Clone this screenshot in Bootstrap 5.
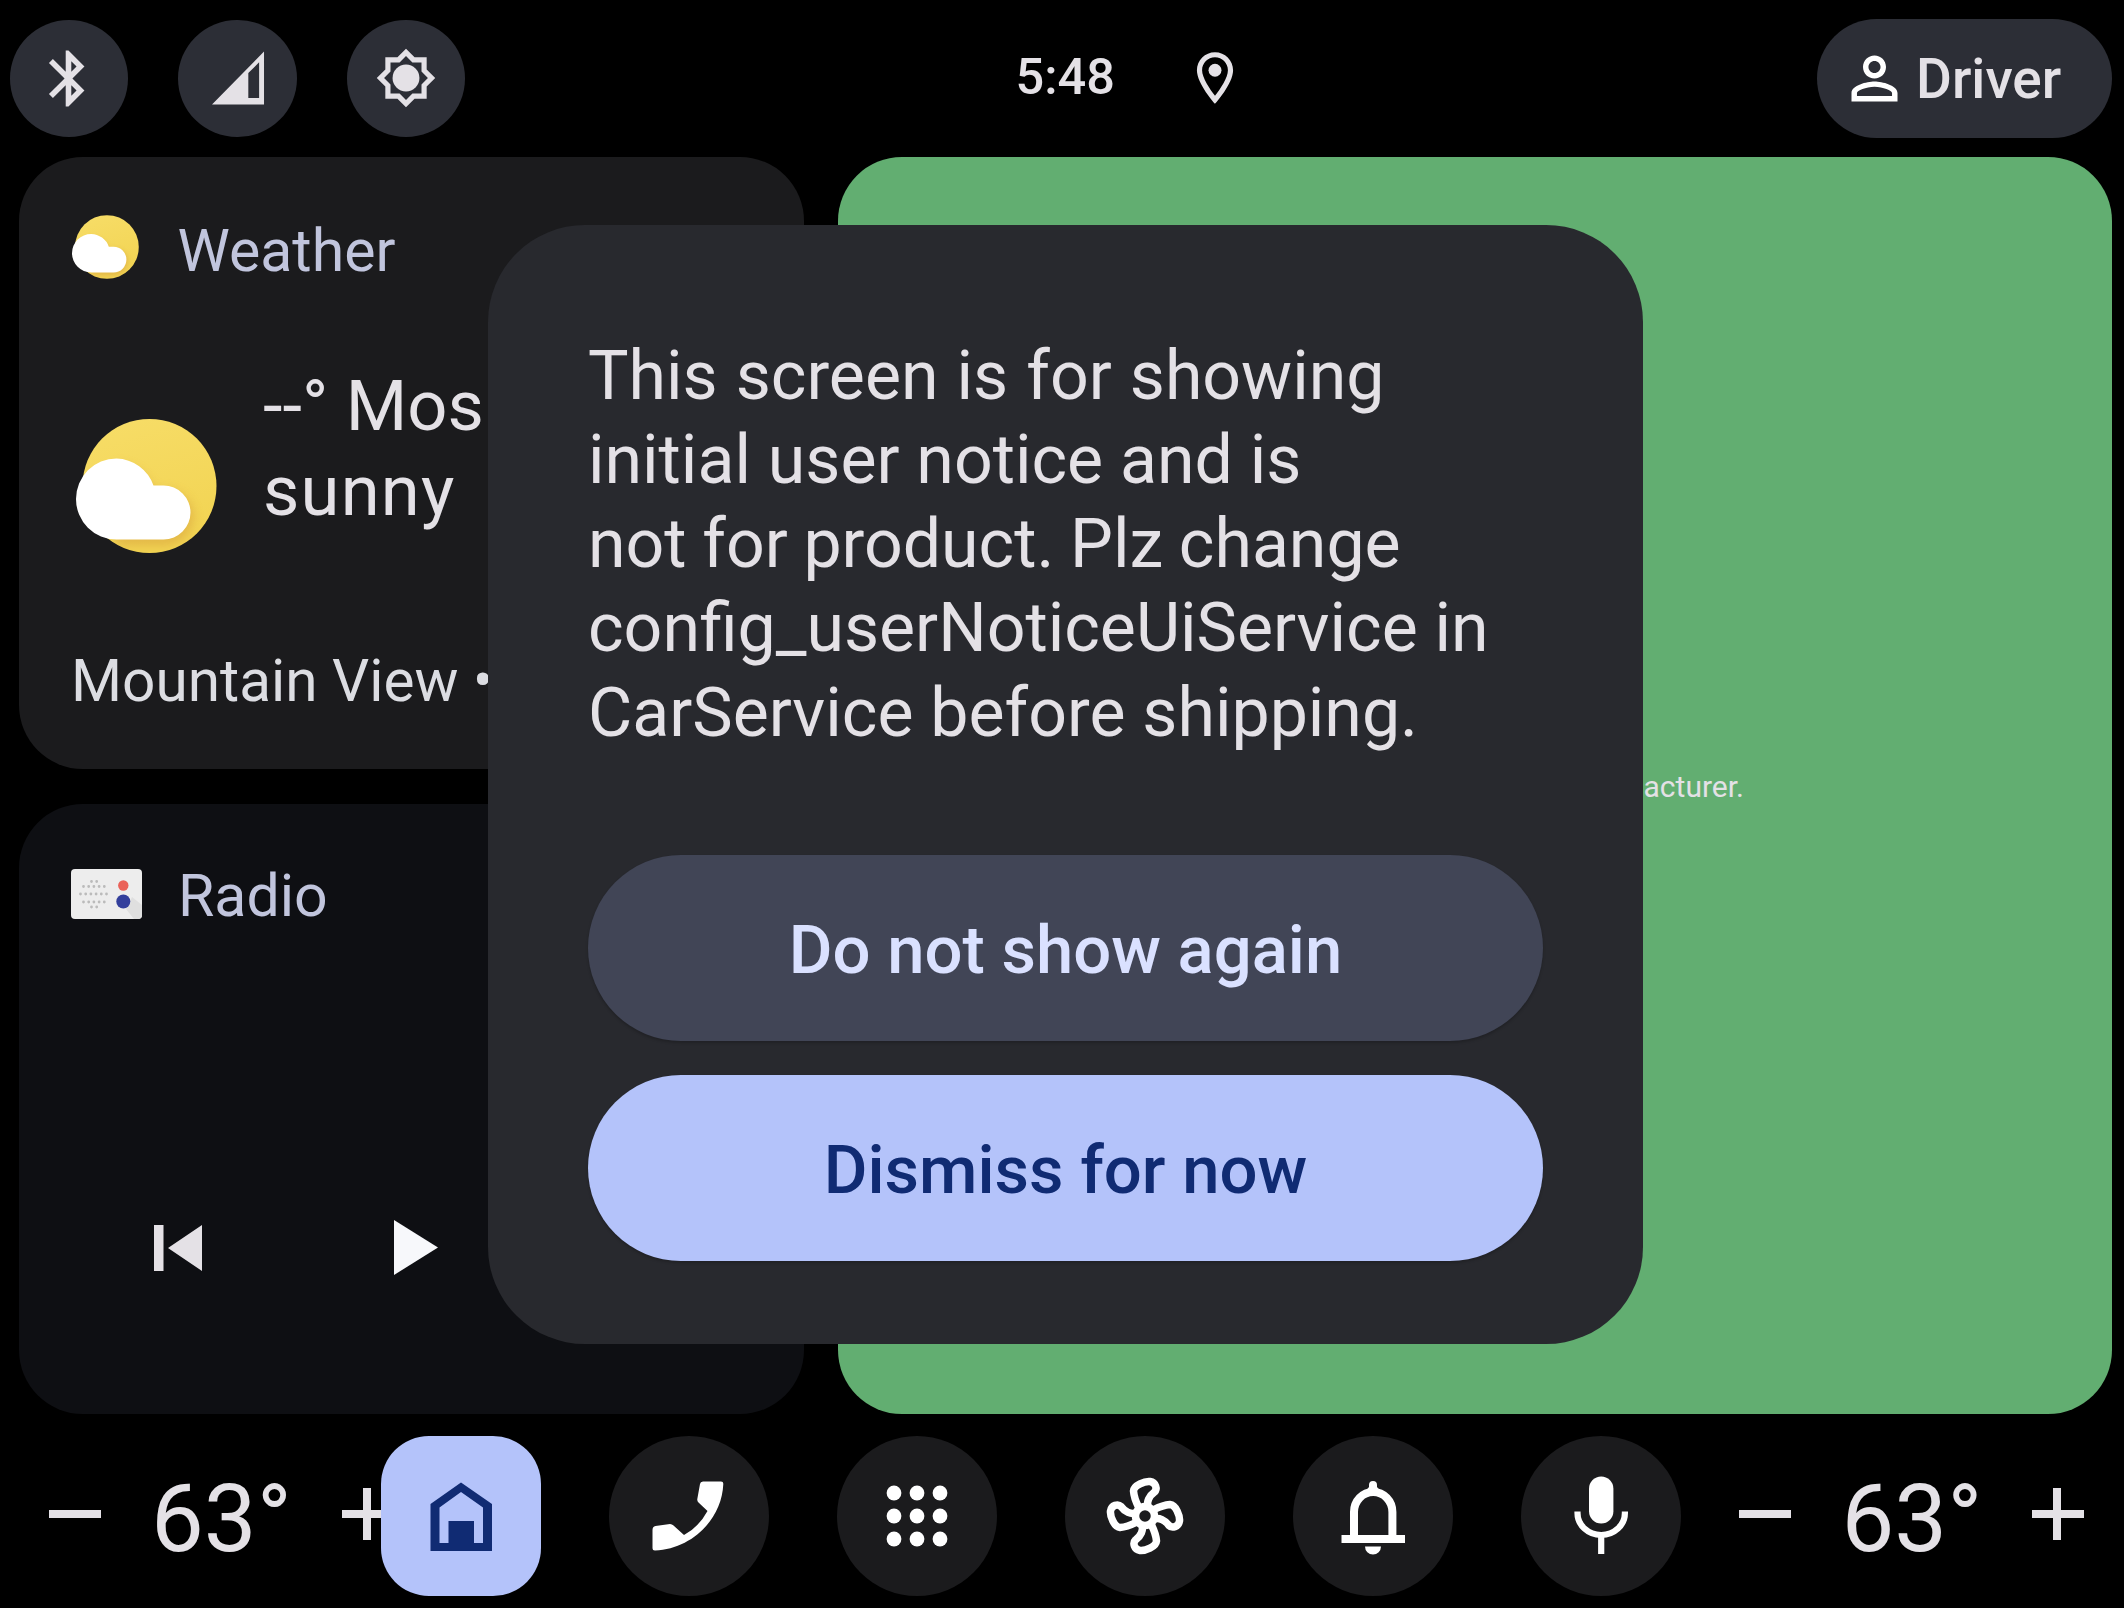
<!DOCTYPE html>
<html lang="en">
<head>
<meta charset="utf-8">
<meta name="viewport" content="width=device-width, initial-scale=1">
<title>Car home</title>
<link rel="stylesheet" href="https://cdn.jsdelivr.net/npm/bootstrap@5.3.0/dist/css/bootstrap.min.css">
<style>
html, body { height: 100%; }
body { background: #000; color: #e4e1e6; font-family: Roboto, "Liberation Sans", sans-serif; overflow: hidden; }
svg { display: block; flex: none; }
.screen { width: 2124px; height: 1608px; }
.topbar { height: 156.5px; padding: 0 12px 0 9.5px; }
.topbar .side { flex: 1 1 0; gap: 50.5px; }
.quick { width: 118.3px; height: 117px; background: #2c2e36; color: #e4e1e6; }
.signal { margin-left: 3px; }
.clock { font-size: 50.5px; font-weight: 500; line-height: 1; margin-top: -2px; }
.status { gap: 69px; padding-left: 140px; }
.driver { width: 295px; height: 118.5px; background: #2c2e36; color: #e4e1e6; font-size: 55px; font-weight: 500; padding: 0 0 0 23px; gap: 7px; }
.driver span { padding-top: 1px; }
.panes { height: 1257.5px; padding: 0 12px 0 19px; gap: 34px; }
.left-col { width: 785px; gap: 34.5px; }
.pane { border-radius: 64px; overflow: hidden; }
.weather { height: 612.5px; background: #1b1b1d; padding: 58px 52px 0; }
.radio { height: 610.5px; background: #0e0f13; padding: 58px 52px 0; }
.pane-title { height: 69px; font-size: 59px; line-height: 68px; color: #c1c5dd; gap: 38.5px; }
.radio .pane-title { gap: 36px; }
.radio .pane-title svg { margin-bottom: 5px; }
.weather .pane-title svg { margin-left: 1px; }
.weather .pane-title span { padding-top: 2px; }
.forecast { font-size: 70.5px; line-height: 84.5px; gap: 46px; margin-top: 80.5px; }
.forecast .sky { letter-spacing: 1.2px; }
.sun-large { margin: 55px 0 0 5px; }
.place { font-size: 58.5px; line-height: 68px; color: #dcdde2; margin-top: 94px; }
.transport { margin-top: 289.5px; padding-left: 83px; gap: 192px; }
.map-pane { background: #62ae71; font-size: 30px; line-height: 36px; padding: 612px 368px 0 0; }
.navrow { height: 194px; padding-top: 9px; }
.climate { width: 381px; font-size: 94px; line-height: 110px; overflow: hidden; }
.climate svg { margin-bottom: 3px; }
.climate-left { padding-left: 49px; }
.climate-right { width: 442px; padding-left: 58px; }
.climate .deg { width: 153px; margin: 6px 38px 0 50px; }
.climate-right .deg { margin: 6px 37px 0 50.5px; }
.dock { gap: 68px; }
.dock-btn { width: 160px; height: 160px; background: #1b1b1d; color: #fff; }
.dock-btn.current { background: #b4c3fa; color: #102b73; border-radius: 48px; }
.notice { left: 488px; top: 225px; width: 1155px; height: 1119px; border-radius: 97px; background: #28292e; padding: 108.5px 100px 0; }
.notice p { font-size: 68px; line-height: 84.3px; margin: 0 -20px 100px 0; white-space: nowrap; }
.loose { word-spacing: 1.2px; }
.tight { word-spacing: -1.2px; }
.choices { gap: 34px; }
.choice { height: 186px; border-radius: 93px; border: 0; font-size: 67px; font-weight: 500; padding: 5px 0 0; box-shadow: 0 2px 3px rgba(0,0,0,.2); }
.choice-soft, .choice-soft:hover { background: #414556; color: #dae1ff; }
.choice-main, .choice-main:hover { background: #b4c3fa; color: #102b73; }
</style>
</head>
<body>
<svg width="0" height="0" class="position-absolute">
  <defs>
    <linearGradient id="sunfill" x1="0" y1="0" x2="0.3" y2="1"><stop offset="0" stop-color="#f7dd68"/><stop offset="1" stop-color="#f2d453"/></linearGradient>
    <filter id="soft" x="-20%" y="-20%" width="140%" height="150%"><feGaussianBlur stdDeviation="5"/></filter>
    <clipPath id="sunclip"><circle cx="73.5" cy="67" r="67"/></clipPath>
    <symbol id="partly" viewBox="0 0 141 134">
      <circle cx="73.5" cy="67" r="67" fill="url(#sunfill)"/>
      <g clip-path="url(#sunclip)"><path d="M40 45a40 40 0 0 1 37 25q36-3 41 26q-2 26-26 31H40z" fill="#d9a441" opacity=".55" filter="url(#soft)"/></g>
      <path d="M40.500 39.500a40.500 40.500 0 0 1 37 27h10a27 27 0 0 1 0 54H40.500a40.300 40.300 0 0 1 0-81z" fill="#fff"/>
    </symbol>
  </defs>
</svg>
<div class="screen d-flex flex-column position-relative">
  <header class="topbar d-flex align-items-center">
    <div class="side d-flex">
      <div class="quick rounded-circle d-flex align-items-center justify-content-center"><svg width="67" height="67" viewBox="0 0 24 24" fill="currentColor"><path d="M17.710 7.710L12 2h-1v7.590L6.410 5 5 6.410 10.590 12 5 17.590 6.410 19 11 14.410V22h1l5.710-5.710-4.300-4.290 4.300-4.290zM13 5.830l1.880 1.880L13 9.590V5.830zm1.880 10.460L13 18.170v-3.760l1.880 1.880z"/></svg></div>
      <div class="quick rounded-circle d-flex align-items-center justify-content-center"><svg class="signal" width="53" height="54" viewBox="0 0 54 54" fill="currentColor"><path fill-rule="evenodd" d="M0 54L53 0V54zM37 22V47.500H48V11z"/></svg></div>
      <div class="quick rounded-circle d-flex align-items-center justify-content-center"><svg width="62" height="62" viewBox="0 0 24 24" fill="currentColor"><path d="M20 8.690V4h-4.690L12 .690 8.690 4H4v4.690L.690 12 4 15.310V20h4.690L12 23.310 15.310 20H20v-4.690L23.310 12 20 8.690zm-2 5.790V18h-3.520L12 20.480 9.520 18H6v-3.520L3.520 12 6 9.520V6h3.520L12 3.520 14.480 6H18v3.520L20.480 12 18 14.480z"/><circle cx="12" cy="12" r="5.200"/></svg></div>
    </div>
    <div class="status d-flex align-items-center">
      <span class="clock">5:48</span>
      <svg width="62" height="62" viewBox="0 0 24 24" fill="currentColor"><path d="M12 2C8.130 2 5 5.130 5 9c0 5.250 7 13 7 13s7-7.750 7-13c0-3.870-3.130-7-7-7zM7 9c0-2.760 2.240-5 5-5s5 2.240 5 5c0 2.880-2.880 7.190-5 9.880C9.920 16.210 7 11.850 7 9z"/><circle cx="12" cy="9" r="2.500"/></svg>
    </div>
    <div class="side d-flex justify-content-end">
      <div class="driver rounded-pill d-flex align-items-center"><svg width="69" height="69" viewBox="0 0 24 24" fill="#fff"><path d="M12 5.900c1.160 0 2.100.940 2.100 2.100s-.940 2.100-2.100 2.100S9.900 9.160 9.900 8s.940-2.100 2.100-2.100m0 9c2.970 0 6.100 1.460 6.100 2.100v1.100H5.900V17c0-.640 3.130-2.100 6.100-2.100M12 4C9.790 4 8 5.790 8 8s1.790 4 4 4 4-1.790 4-4-1.790-4-4-4zm0 9c-2.670 0-8 1.340-8 4v3h16v-3c0-2.660-5.330-4-8-4z"/></svg><span>Driver</span></div>
    </div>
  </header>

  <main class="panes d-flex">
    <div class="left-col d-flex flex-column">
      <section class="pane weather">
        <div class="pane-title d-flex align-items-start"><svg width="67" height="64"><use href="#partly"/></svg><span>Weather</span></div>
        <div class="forecast d-flex align-items-start"><svg class="sun-large" width="141" height="134"><use href="#partly"/></svg><div>--° Mos<br><span class="sky">sunny</span></div></div>
        <div class="place">Mountain View •</div>
      </section>
      <section class="pane radio">
        <div class="pane-title d-flex align-items-center">
          <svg width="71" height="50" viewBox="0 0 71 50"><rect width="71" height="50" rx="4" fill="#ededed"/><path d="M55 40L61 28L71 36V46a4 4 0 0 1-4 4H63z" fill="#dfdfdf"/>
            <g stroke="#bbb" stroke-width="2.800" stroke-linecap="round" stroke-dasharray="0 5.200"><path d="M20.500 12.500h9M12.500 17.500h25M9.500 25h30M12.500 33h25M20.500 38h9"/></g>
            <circle cx="52.300" cy="16.500" r="5.200" fill="#ea6259"/><circle cx="52.300" cy="32.500" r="7" fill="#333f9c"/></svg>
          <span>Radio</span></div>
        <div class="transport d-flex align-items-center">
          <svg width="48" height="46" viewBox="0 0 48 46" fill="#e4e1e6"><path d="M0 0H9.500V46H0zM48 0V46L14 23z"/></svg>
          <svg width="44" height="55" viewBox="0 0 44 55" fill="#f7f8fb"><path d="M0 0L44 27.500L0 55z"/></svg>
        </div>
      </section>
    </div>
    <section class="pane map-pane flex-grow-1 text-end">acturer.</section>
  </main>

  <footer class="navrow d-flex align-items-center">
    <div class="climate climate-left d-flex align-items-center flex-shrink-0">
      <svg width="52" height="52" fill="currentColor"><path d="M0 22H52V30H0z"/></svg>
      <span class="deg flex-shrink-0">63°</span>
      <svg width="52" height="52" fill="currentColor"><path d="M0 22H21V0H29V22H52V30H29V52H21V30H0z"/></svg>
    </div>
    <nav class="dock d-flex flex-shrink-0">
      <div class="dock-btn current"><svg width="160" height="160" viewBox="0 0 160 160" fill="currentColor"><path fill-rule="evenodd" d="M49.500 68L80 46.500L111 68V115H49.500zM58.500 71.500V107H67.500V85H93V107H102V71.500L80 56z"/></svg></div>
      <div class="dock-btn rounded-circle"><svg width="160" height="160" viewBox="0 0 160 160" fill="currentColor"><path d="M91 48Q91.300 45.500 94 45.500H112Q114.500 45.500 114.300 48C113 83 83 113 46 114.500Q43.500 114.500 43.500 112V94Q43.500 90.500 46.500 90L61 88Q63 88 64.500 89.500L75 99Q90 91 98.500 75L89.500 66.500Q88 65 88.300 63z"/></svg></div>
      <div class="dock-btn rounded-circle"><svg width="160" height="160" viewBox="0 0 160 160" fill="currentColor"><g id="dots"><circle cx="57" cy="57" r="7.400"/><circle cx="80" cy="57" r="7.400"/><circle cx="103" cy="57" r="7.400"/></g><use href="#dots" y="23"/><use href="#dots" y="46"/></svg></div>
      <div class="dock-btn rounded-circle"><svg width="160" height="160" viewBox="-80 -80 160 160" fill="none" stroke="currentColor" stroke-width="7.500"><circle r="9.500"/><path id="blade" d="M-6.500 -9C-9 -14 -11 -19 -11.500 -25C-11 -31 0 -35 5 -34.500C11 -33.500 12.500 -27 9.500 -24C4 -20 1.500 -14 3 -9.500"/><use href="#blade" transform="rotate(90)"/><use href="#blade" transform="rotate(180)"/><use href="#blade" transform="rotate(270)"/></svg></div>
      <div class="dock-btn rounded-circle"><svg width="160" height="160" viewBox="0 0 160 160" fill="currentColor"><path d="M48.500 99H112V107H48.500zM72 110.500H88A8 8 0 0 1 72 110.500z"/><path d="M61 101V76a19.200 20 0 0 1 38.400 0V101" fill="none" stroke="currentColor" stroke-width="8"/><path d="M70 58L76 51V49a4 4 0 0 1 8 0V51L90 58z"/></svg></div>
      <div class="dock-btn rounded-circle"><svg width="160" height="160" viewBox="0 0 160 160" fill="currentColor"><rect x="68" y="40.500" width="24.400" height="47" rx="12.200"/><path d="M56.500 75.500V77a23.700 22 0 0 0 47.400 0V75.500M80.200 99V118" fill="none" stroke="currentColor" stroke-width="6.200"/></svg></div>
    </nav>
    <div class="climate climate-right d-flex align-items-center flex-shrink-0">
      <svg width="52" height="52" fill="currentColor"><path d="M0 22H52V30H0z"/></svg>
      <span class="deg flex-shrink-0">63°</span>
      <svg width="52" height="52" fill="currentColor"><path d="M0 22H21V0H29V22H52V30H29V52H21V30H0z"/></svg>
    </div>
  </footer>

  <div class="notice position-absolute" role="dialog" aria-modal="true">
    <p><span class="loose">This screen is for showing</span><br>initial user notice and is<br><span class="tight">not for product. Plz change</span><br>config_userNoticeUiService in<br>CarService before shipping.</p>
    <div class="choices d-grid">
      <button type="button" class="btn choice choice-soft">Do not show again</button>
      <button type="button" class="btn choice choice-main">Dismiss for now</button>
    </div>
  </div>
</div>
<script src="https://cdn.jsdelivr.net/npm/bootstrap@5.3.0/dist/js/bootstrap.bundle.min.js"></script>
</body>
</html>
